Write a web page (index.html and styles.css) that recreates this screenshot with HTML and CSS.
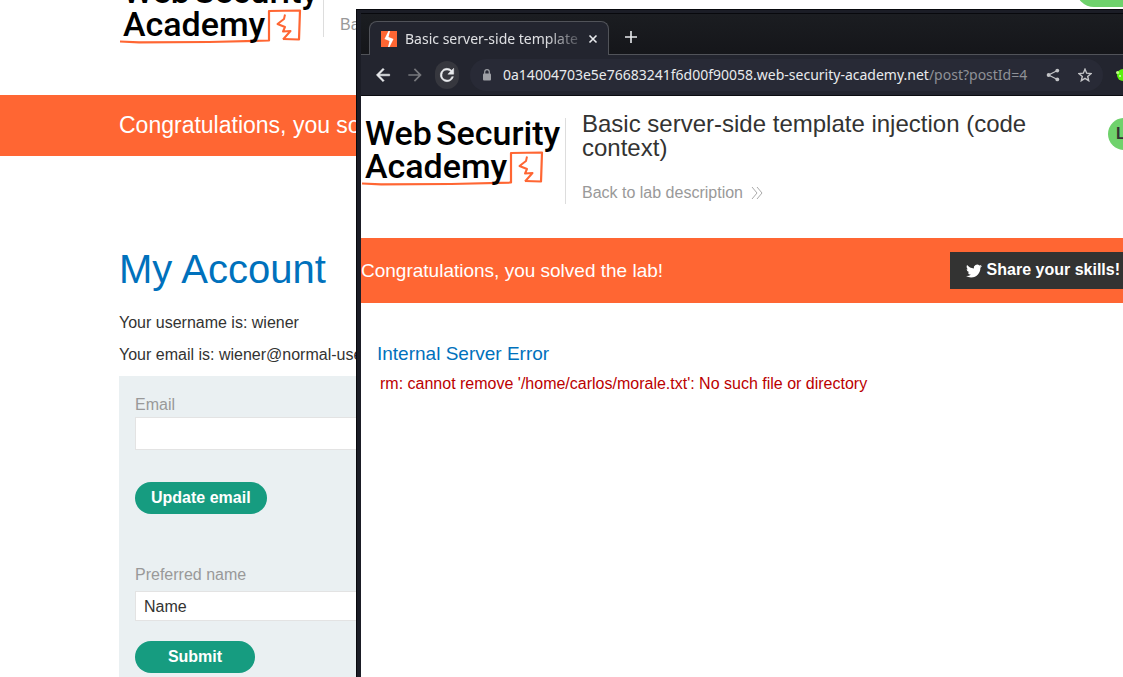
FILE: index.html
```html
<!DOCTYPE html>
<html lang="en">
<head>
<meta charset="utf-8">
<title>Web Security Academy</title>
<link rel="stylesheet" href="styles.css">
</head>
<body>
<svg class="defs" aria-hidden="true">
  <symbol id="academy-logo" viewBox="0 0 204 80">
    <path d="M1 71.500L20 72.300L90 72L150 70.500V41L181 40.500L180 69.500L164 69" fill="none" stroke="#f63" stroke-width="2.200" stroke-linejoin="round"/>
    <path d="M166 44.500L165 49L158.500 54L166 57L164 61.500L171.500 61L164 69.500" fill="none" stroke="#f63" stroke-width="2" stroke-linejoin="round"/>
    <text class="logo-text"><tspan x="4" y="33">Web</tspan><tspan x="75" y="33">Security</tspan><tspan x="4" y="66">Academy</tspan></text>
  </symbol>
</svg>
<div class="desktop">
  <main class="page">
    <header class="page-header">
      <svg class="logo" role="img" aria-label="Web Security Academy"><use href="#academy-logo"/></svg>
      <div class="page-title"><a class="back-link" href="#">Back to lab description</a></div>
      <span class="status"></span>
    </header>
    <section class="page-banner">Congratulations, you solved the lab!</section>
    <section class="account">
      <h1>My Account</h1>
      <p>Your username is: wiener</p>
      <p>Your email is: wiener@normal-user.net</p>
      <div class="forms">
        <form class="email-form">
          <label for="email">Email</label>
          <input id="email" type="text">
          <button type="button">Update email</button>
        </form>
        <form class="name-form">
          <label for="name">Preferred name</label>
          <select id="name"><option>Name</option></select>
          <button type="button">Submit</button>
        </form>
      </div>
    </section>
  </main>

  <section class="browser">
    <div class="tabs">
      <div class="tab">
        <svg class="favicon" viewBox="0 0 16 16"><rect width="16" height="16" fill="#f63"/><path d="M9 0L7.500 6L12.500 8L8.500 16H7L8.500 10L3.500 8L7.500 0Z" fill="#fff"/></svg>
        <span class="tab-title">Basic server-side template</span>
        <button class="tab-close" type="button" aria-label="Close tab"><svg viewBox="0 0 10 10"><path d="M1.500 1.500L8.500 8.500M8.500 1.500L1.500 8.500"/></svg></button>
      </div>
      <button class="new-tab" type="button" aria-label="New tab"><svg viewBox="0 0 12 12"><path d="M6 0V12M0 6H12"/></svg></button>
    </div>
    <div class="toolbar">
      <button class="tool" type="button" aria-label="Back"><svg viewBox="0 0 24 24"><path fill="#e8eaed" d="M20 11H7.830l5.590-5.590L12 4l-8 8 8 8 1.410-1.410L7.830 13H20z" stroke="#e8eaed" stroke-width=".6"/></svg></button>
      <button class="tool" type="button" aria-label="Forward"><svg viewBox="0 0 24 24"><path fill="#77787d" d="M4 11h12.170l-5.590-5.590L12 4l8 8-8 8-1.410-1.410L16.170 13H4z"/></svg></button>
      <button class="tool reload" type="button" aria-label="Reload"><svg viewBox="0 0 24 24"><path fill="#e8eaed" stroke="#e8eaed" stroke-width=".6" d="M17.650 6.350A8 8 0 1 0 19.730 14h-2.080A6 6 0 1 1 12 6c1.660 0 3.140.690 4.220 1.780L13 11h7V4z"/></svg></button>
      <div class="omnibox">
        <svg class="lock" viewBox="0 0 10 12"><rect x="1" y="4.500" width="8" height="7" rx="1" fill="#9ea0a5"/><path d="M2.700 5V3A2.300 2.300 0 0 1 7.300 3V5" fill="none" stroke="#9ea0a5" stroke-width="1.200"/></svg>
        <span class="url">0a14004703e5e76683241f6d00f90058.web-security-academy.net<span class="url-path">/post?postId=4</span></span>
        <button class="box-tool" type="button" aria-label="Share"><svg viewBox="0 0 14 14"><path d="M11.500 2.500L2.500 7L11.500 11.500" fill="none" stroke="#c3c4c7" stroke-width="1.300"/><circle cx="11.300" cy="2.600" r="1.900" fill="#c3c4c7"/><circle cx="2.600" cy="7" r="1.900" fill="#c3c4c7"/><circle cx="11.300" cy="11.400" r="1.900" fill="#c3c4c7"/></svg></button>
        <button class="box-tool" type="button" aria-label="Bookmark"><svg viewBox="0 0 14 14"><path d="M7 1.200L8.700 5.200L13 5.600L9.700 8.400L10.700 12.700L7 10.400L3.300 12.700L4.300 8.400L1 5.600L5.300 5.200Z" fill="none" stroke="#c3c4c7" stroke-width="1.400"/></svg></button>
      </div>
      <svg class="extension" viewBox="0 0 14 14"><circle cx="7" cy="7" r="6" fill="#5bf10c"/><circle cx="1.600" cy="4.500" r="1.600" fill="#baff83"/><circle cx="4" cy="8" r="1" fill="#d9ffc0"/></svg>
    </div>
    <div class="view">
      <header class="lab-header">
        <svg class="logo" role="img" aria-label="Web Security Academy"><use href="#academy-logo"/></svg>
        <div class="lab-title">
          <h2>Basic server-side template injection (code context)</h2>
          <a class="back-link" href="#">Back to lab description <svg class="chevrons" viewBox="0 0 12 14"><path d="M1 1L6 7L1 13M6 1L11 7L6 13" fill="none" stroke="#aaa"/></svg></a>
        </div>
        <span class="badge">LAB</span>
      </header>
      <section class="lab-banner">
        <span>Congratulations, you solved the lab!</span>
        <a class="share" href="#"><svg viewBox="0 0 24 24"><path fill="#fff" d="M23.950 4.570a10 10 0 0 1-2.820.770 4.960 4.960 0 0 0 2.160-2.720c-.950.550-2 .960-3.130 1.180a4.920 4.920 0 0 0-8.380 4.480C7.690 8.100 4.070 6.130 1.640 3.160a4.820 4.820 0 0 0-.670 2.480c0 1.710.870 3.210 2.190 4.100a4.900 4.900 0 0 1-2.230-.620v.060a4.920 4.920 0 0 0 3.950 4.830 5 5 0 0 1-2.210.080 4.940 4.940 0 0 0 4.600 3.420A9.870 9.870 0 0 1 0 19.540a14 14 0 0 0 7.550 2.210c9.050 0 14-7.500 14-13.980 0-.210 0-.420-.020-.630a9.940 9.940 0 0 0 2.460-2.550z"/></svg>Share your skills!</a>
      </section>
      <section class="error">
        <h3>Internal Server Error</h3>
        <p>rm: cannot remove '/home/carlos/morale.txt': No such file or directory</p>
      </section>
    </div>
  </section>
</div>
</body>
</html>
```
FILE: styles.css
```css
* { box-sizing: border-box; }
body { margin: 0; background: #fff; color: #333332; font: 16px/24px "Liberation Sans", Arial, sans-serif; }
h1, h2, h3, p { margin: 0; font-weight: 400; }
button { border: 0; padding: 0; background: none; color: inherit; font: inherit; }
a { text-decoration: none; }
.defs { position: absolute; width: 0; height: 0; }
.desktop { position: relative; height: 100vh; overflow: hidden; }

.logo { flex: none; width: 204px; height: 80px; }
.logo-text { font: 500 34px Roboto, sans-serif; fill: #000; }
.back-link { color: #999; }

/* page behind, scrolled down */
.page-header { display: flex; margin-top: -30px; height: 125px; padding-left: 119px; }
.page-title { align-self: flex-start; height: 67px; padding: 43px 0 0 16px; border-left: 1px solid #ddd; }
.status { width: 100px; height: 37px; margin: 0 -53px 0 auto; border-radius: 18px; background: #6fd26c; }
.page-banner { padding: 0 119px; background: #f63; color: #fff; font-size: 23px; line-height: 61px; }
.account { padding: 88px 119px 0; }
.account h1 { color: #0071bc; font-size: 40px; line-height: 50px; margin-bottom: 17px; }
.account p { margin-bottom: 8px; }
.forms { margin-top: 9px; padding: 17px 16px 16px; background: #eaf0f2; }
.forms form { display: flex; flex-direction: column; align-items: flex-start; }
.forms label { color: #999; }
.forms input, .forms select { width: 100%; padding: 0 8px; border: 1px solid #e3e3e3; border-radius: 0; background: #fff; color: #333332; font: inherit; appearance: none; }
.forms input { height: 33px; }
.forms select { height: 30px; margin-top: 4px; padding: 1px 8px 0; }
.forms button { height: 32px; border-radius: 16px; background: #169c80; color: #fff; font-weight: 700; }
.email-form { margin-bottom: 49px; }
.email-form button { margin-top: 32px; padding: 0 16px; }
.name-form button { margin-top: 20px; width: 120px; }

/* browser window on top */
.browser { position: absolute; top: 9px; left: 356px; right: -13px; bottom: 0; display: flex; flex-direction: column; padding: 3px 0 0 4px; background: #1b1d26; border: solid #08090d; border-width: 1px 0 0 1px; }
.tabs { display: flex; flex: none; height: 42px; padding: 7px 0 0 8px; background: linear-gradient(#1b1d21, #15161a); border-bottom: 1px solid #515359; border-top: 1px solid #08090d; }
.tab { display: flex; align-items: center; width: 240px; height: 34px; padding: 0 10px 0 11px; background: #23252f; border: 1px solid #515359; border-bottom: 0; border-radius: 8px 8px 0 0; }
.favicon { flex: none; width: 16px; height: 16px; margin-right: 8px; }
.tab-title { flex: 1; overflow: hidden; white-space: nowrap; font: 14px/20px "Noto Sans", sans-serif; color: #dfe0e3; mask-image: linear-gradient(90deg, #000 80%, transparent 105%); }
.tab-close { display: flex; width: 10px; height: 10px; margin-left: 8px; }
.tab-close svg, .new-tab svg { width: 100%; height: 100%; stroke: #e8eaed; stroke-width: 1.6; fill: none; }
.new-tab { width: 12px; height: 12px; margin: 10px 16px; display: flex; }
.toolbar { display: flex; flex: none; align-items: center; height: 41px; padding-left: 10px; background: #23252f; border-bottom: 1px solid #0b0c11; }
.tool { display: flex; align-items: center; justify-content: center; width: 24px; height: 28px; margin-right: 8px; border-radius: 14px; }
.tool svg { width: 20px; height: 20px; }
.reload { margin-right: 11px; background: #36373e; }
.omnibox { flex: 1; display: flex; align-items: center; height: 32px; padding: 0 11px 0 12px; border-radius: 16px; background: #282a36; }
.lock { width: 10px; height: 12px; margin-right: 11px; }
.url { flex: 1; white-space: nowrap; font: 14px/20px "Noto Sans", sans-serif; color: #e8eaed; }
.url-path { color: #8f9197; }
.box-tool { display: flex; width: 14px; height: 14px; margin-left: 18px; }
.box-tool svg { width: 100%; height: 100%; }
.extension { width: 14px; height: 14px; margin: 0 6px 0 13px; }

.view { flex: 1; background: #fff; }
.lab-header { display: flex; height: 142px; padding-top: 16px; }
.lab-title { flex: 1; align-self: flex-start; height: 92px; padding: 0 64px 0 17px; background: linear-gradient(#ddd, #ddd) 0 6px / 1px 86px no-repeat; }
.lab-title h2 { font-size: 24px; line-height: 24px; margin-bottom: 21px; }
.chevrons { width: 12px; height: 14px; margin-left: 4px; vertical-align: -2px; }
.badge { width: 28px; height: 32px; margin-top: 6px; padding-left: 8px; overflow: hidden; border-radius: 16px 0 0 16px; background: #6fd26c; font-weight: 700; line-height: 32px; }
.lab-banner { display: flex; align-items: center; justify-content: space-between; height: 65px; background: #f63; color: #fff; font-size: 19px; }
.share { display: flex; align-items: center; height: 37px; padding: 0 16px 2px; background: #333332; color: #fff; font-size: 16px; font-weight: 700; }
.share svg { width: 16px; height: 16px; margin: 2px 5px 0 0; }
.error { padding: 39px 16px; }
.error h3 { color: #0071bc; font-size: 19px; line-height: 24px; }
.error p { padding: 6px 3px; color: #b00; }
```
